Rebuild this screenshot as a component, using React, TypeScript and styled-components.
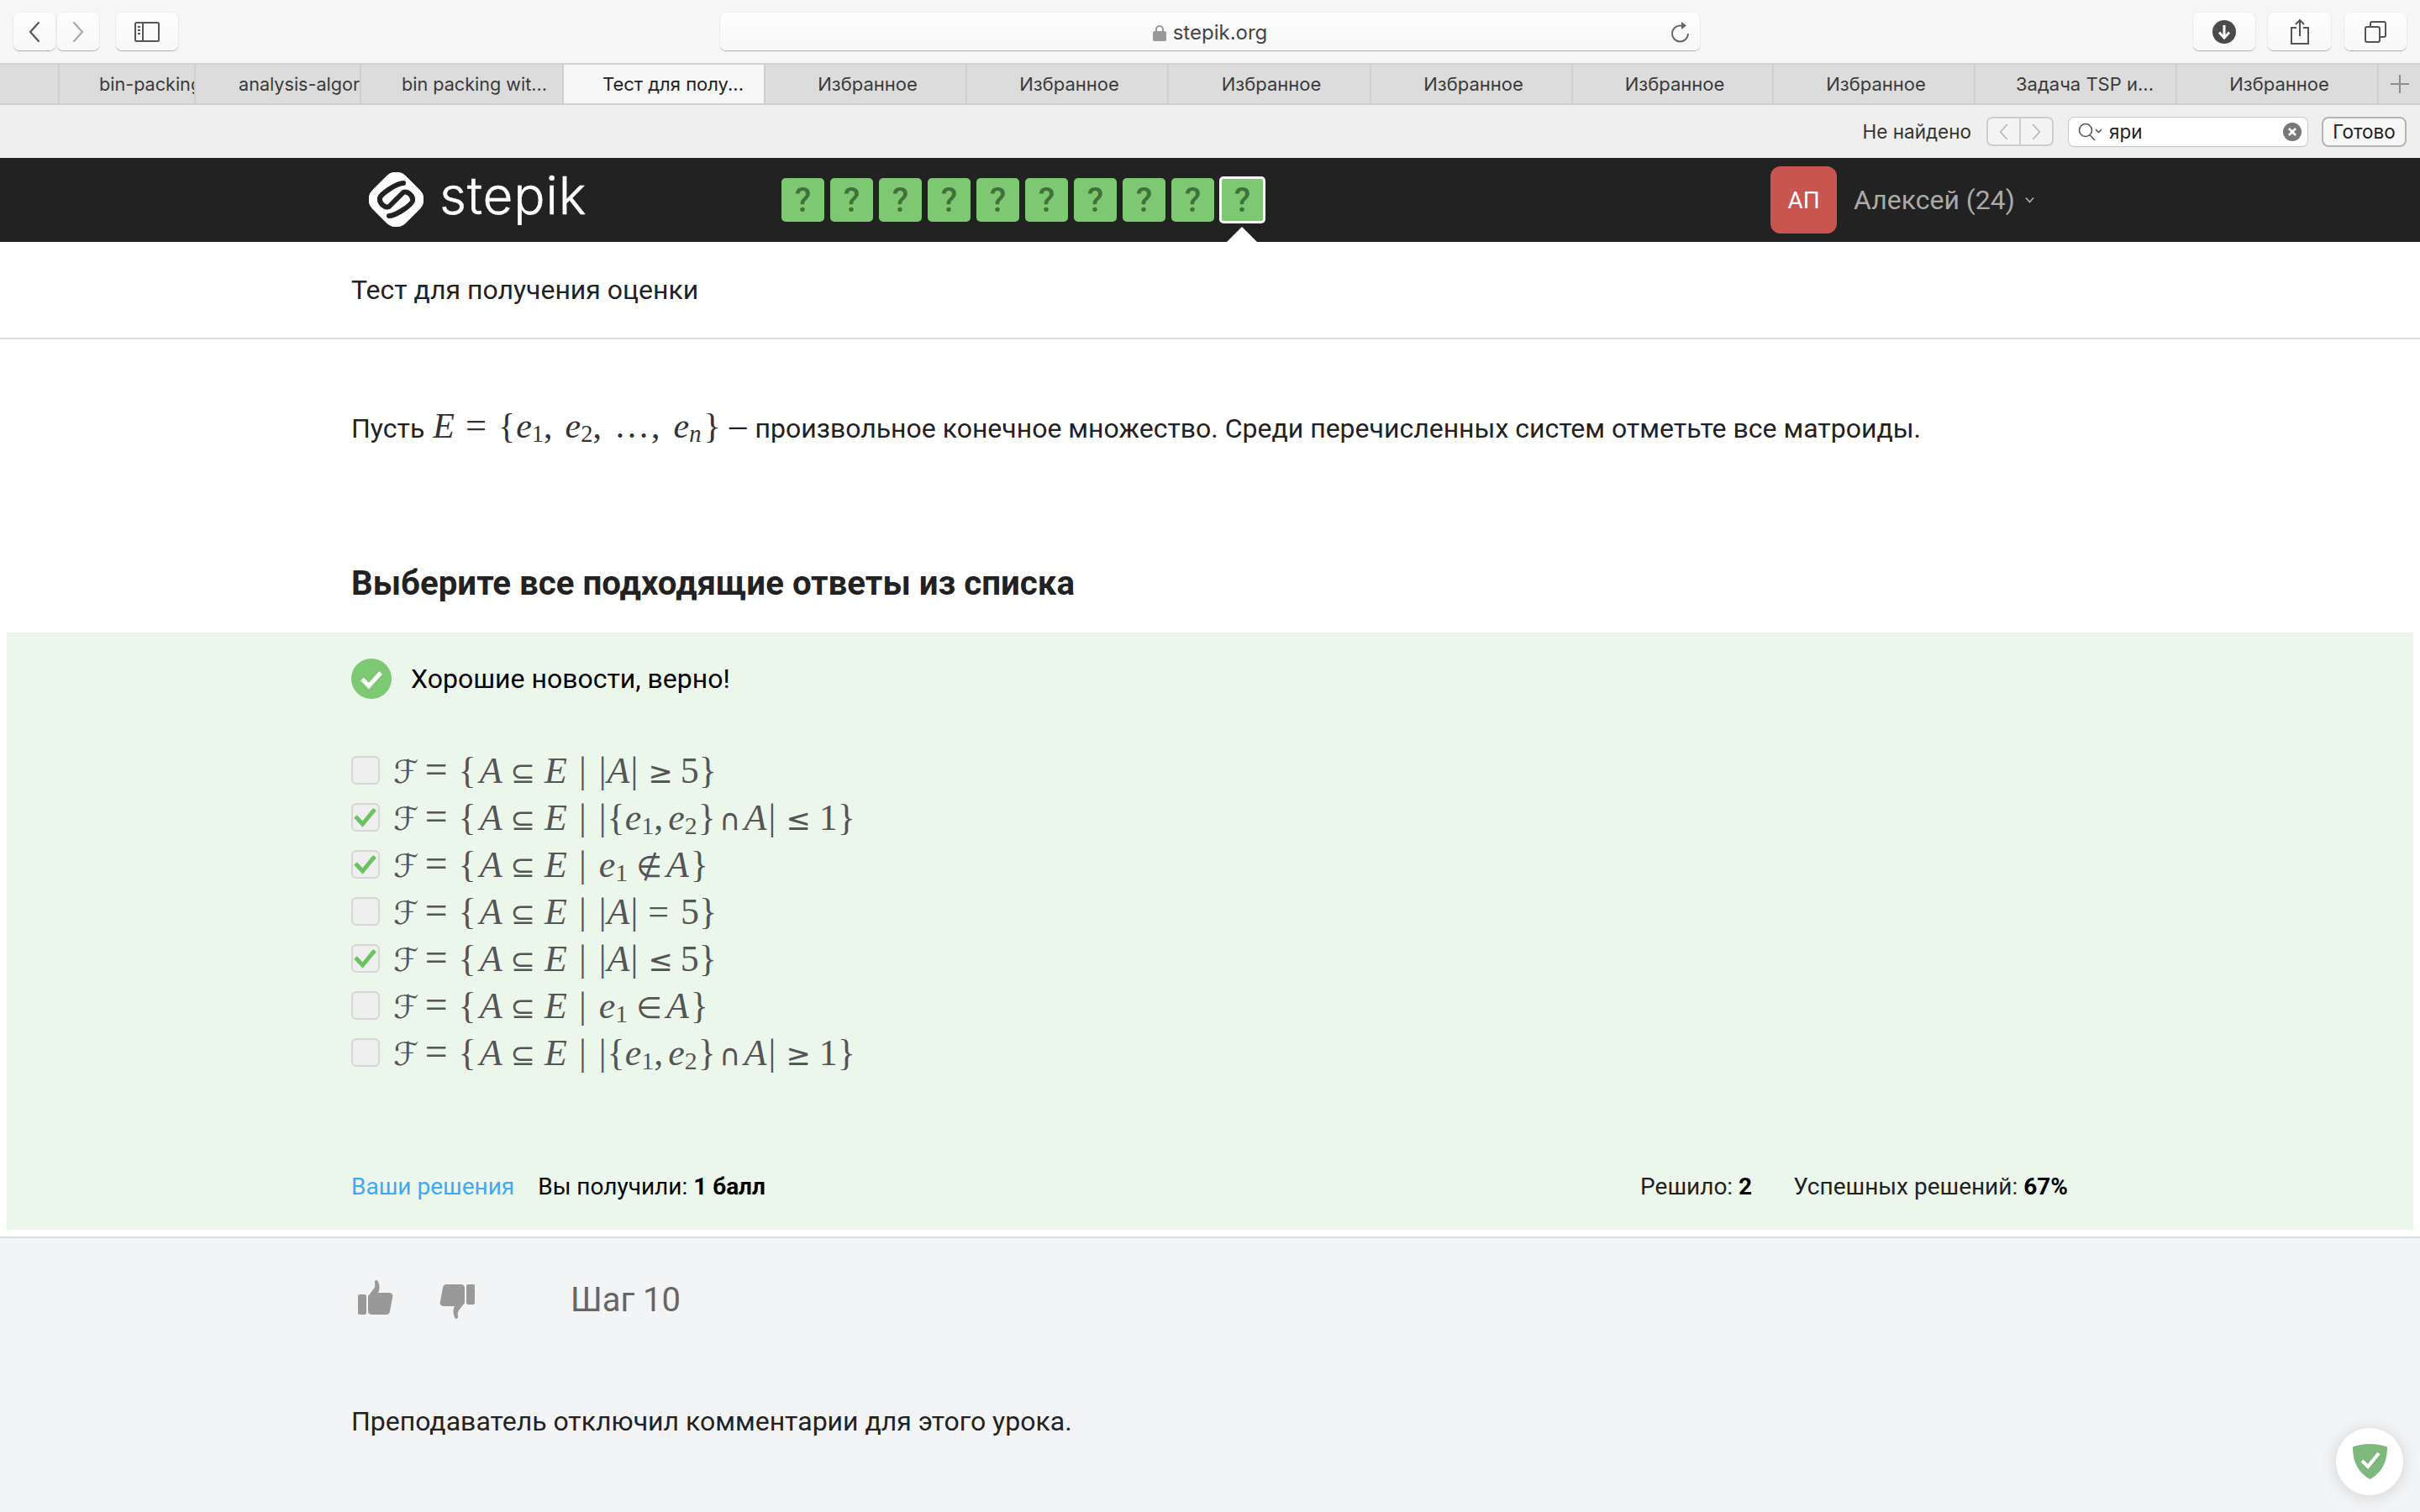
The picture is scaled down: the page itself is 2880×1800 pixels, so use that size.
import React from 'react';
import styled, { createGlobalStyle } from 'styled-components';

const GlobalStyle = createGlobalStyle`
  html, body {
    margin: 0;
    padding: 0;
    background: #fff;
  }
  * { box-sizing: border-box; }
`;

const Page = styled.div`
  position: relative;
  width: 2880px;
  height: 1800px;
  overflow: hidden;
  font-family: Roboto, "Liberation Sans", sans-serif;
  color: #222;
  display: flex;
  flex-direction: column;
`;

/* ---- safari chrome ---- */
const Toolbar = styled.div`
  height: 75px;
  flex: none;
  background: #f6f6f6;
  display: flex;
  align-items: flex-start;
  padding: 15px 16px 0;
`;

const ToolButton = styled.div<{ $w: number; $ml?: number }>`
  width: ${p => p.$w}px;
  height: 45px;
  margin-left: ${p => p.$ml ?? 0}px;
  flex: none;
  background: linear-gradient(#fdfdfd, #f8f8f8);
  border-radius: 7px;
  box-shadow: 0 1px 1px rgba(0, 0, 0, 0.28), 0 0 1px rgba(0, 0, 0, 0.18);
  display: flex;
  align-items: center;
  justify-content: center;
`;

const AddressBar = styled(ToolButton)`
  position: relative;
  gap: 8px;
  padding-top: 2px;
  font-family: Inter, Roboto, sans-serif;
  font-size: 24px;
  color: #444;
`;

const Reload = styled.span`
  position: absolute;
  right: 11px;
  top: 10px;
  display: flex;
`;

const TabBar = styled.div`
  height: 50px;
  flex: none;
  background: #dcdcdc;
  border-top: 2px solid #d2d2d2;
  border-bottom: 2px solid #cfcfcf;
  display: flex;
`;

const Tab = styled.div<{ $w: number; $active?: boolean; $clip?: number; $pad?: number }>`
  width: ${p => p.$w}px;
  flex: none;
  overflow: hidden;
  white-space: nowrap;
  display: flex;
  align-items: center;
  justify-content: ${p => (p.$clip ? 'flex-start' : 'center')};
  padding-left: ${p => p.$clip ?? p.$pad ?? 5}px;
  border-right: 2px solid #cfcfcf;
  background: ${p => (p.$active ? '#f6f6f6' : 'transparent')};
  color: ${p => (p.$active ? '#222' : '#3a3a3a')};
  font-family: Inter, Roboto, sans-serif;
  font-size: ${p => (p.$clip ? '21.6px' : '22px')};
`;

const PlusTab = styled.div`
  flex: 1;
  display: flex;
  align-items: center;
  justify-content: center;
`;

const FindBar = styled.div`
  height: 63px;
  flex: none;
  background: #efefef;
  display: flex;
  align-items: center;
  justify-content: flex-end;
  padding-right: 16px;
  font-family: Inter, Roboto, sans-serif;
  font-size: 22.5px;
  color: #333;
`;

const FindNav = styled.div`
  width: 80px;
  height: 35px;
  margin: 0 18px;
  display: flex;
  border: 2px solid #cdcdcd;
  border-radius: 7px;
  background: #f4f4f4;
`;

const FindNavPart = styled.div<{ $divider?: boolean }>`
  flex: 1;
  display: flex;
  align-items: center;
  justify-content: center;
  border-left: ${p => (p.$divider ? '2px solid #cdcdcd' : 'none')};
`;

const FindInput = styled.div`
  width: 284px;
  height: 34px;
  background: #fff;
  border-radius: 7px;
  box-shadow: 0 0 0 1px #c8c8c8, 0 1px 1px rgba(0, 0, 0, 0.2);
  display: flex;
  align-items: center;
  padding: 0 7px 0 11px;
  gap: 7px;
`;

const FindValue = styled.span`
  flex: 1;
  color: #222;
`;

const DoneButton = styled.div`
  width: 101px;
  height: 36px;
  margin-left: 17px;
  border: 2px solid #b4b4b4;
  border-radius: 8px;
  background: #f6f6f6;
  display: flex;
  align-items: center;
  justify-content: center;
  color: #222;
`;

/* ---- stepik nav ---- */
const Nav = styled.div`
  height: 100px;
  flex: none;
  background: #222;
  display: flex;
  align-items: center;
  padding-left: 439px;
`;

const Logo = styled.div`
  width: 491px;
  height: 100px;
  flex: none;
  display: flex;
  align-items: center;
  gap: 19px;
  margin-top: -2px;
`;

const LogoWord = styled.span`
  font-family: Inter, "Open Sans", sans-serif;
  font-weight: 300;
  font-size: 62px;
  letter-spacing: 0.8px;
  -webkit-text-stroke: 0.5px #fff;
  line-height: 62px;
  margin-top: -8px;
  color: #fff;
`;

const QuizSteps = styled.div`
  width: 1177px;
  flex: none;
  display: flex;
  align-items: center;
  gap: 7px;
`;

const QuizStep = styled.div<{ $current?: boolean }>`
  position: relative;
  width: ${p => (p.$current ? '55px' : '51px')};
  height: ${p => (p.$current ? '56px' : '52px')};
  margin-left: ${p => (p.$current ? '-1px' : '0')};
  flex: none;
  background: #7ec873;
  border-radius: 5px;
  border: ${p => (p.$current ? '3px solid #fff' : 'none')};
  display: flex;
  align-items: center;
  justify-content: center;
  color: #40713b;
  font-size: 40px;
  font-weight: 500;

  ${p =>
    p.$current &&
    `&::after {
      content: '';
      position: absolute;
      left: 6px;
      top: 57px;
      border-left: 18px solid transparent;
      border-right: 18px solid transparent;
      border-bottom: 18px solid #fff;
    }`}
`;

const Avatar = styled.div`
  width: 79px;
  height: 80px;
  flex: none;
  background: #c95550;
  border-radius: 12px;
  color: #fff;
  font-size: 28px;
  display: flex;
  align-items: center;
  justify-content: center;
`;

const UserName = styled.div`
  margin-left: 20px;
  display: flex;
  align-items: center;
  gap: 12px;
  color: #aaa;
  font-size: 32px;
`;

/* ---- lesson ---- */
const SubHeader = styled.div`
  height: 116px;
  flex: none;
  padding-left: 418px;
  border-bottom: 2px solid #ddd;
  display: flex;
  align-items: center;
  font-size: 32px;
`;

const QuestionText = styled.div`
  padding: 80px 0 0 418px;
  height: 267px;
  flex: none;
  font-size: 32px;
  line-height: 48px;
  white-space: nowrap;
`;

const Heading = styled.h2`
  margin: 0;
  padding-left: 418px;
  height: 82px;
  flex: none;
  font-size: 40.25px;
  font-weight: 700;
  line-height: 48px;
  color: #222;
`;

const Feedback = styled.div`
  margin: 0 8px;
  height: 711px;
  flex: none;
  background: #ecf7ec;
  padding: 30px 0 0 410px;
  display: flex;
  flex-direction: column;
`;

const FeedbackTitle = styled.div`
  display: flex;
  align-items: center;
  gap: 23px;
  height: 50px;
  color: #000;
  font-size: 32px;
`;

const Answers = styled.div`
  margin-top: 67px;
  display: flex;
  flex-direction: column;
  gap: 23px;
`;

const Answer = styled.div`
  height: 33px;
  display: flex;
  align-items: center;
`;

const CheckBox = styled.div`
  width: 34px;
  height: 34px;
  flex: none;
  background: #efefef;
  border: 2px solid #d6d6d6;
  border-radius: 6px;
  margin-right: 16px;
  display: flex;
  align-items: center;
  justify-content: center;
`;

const MathRun = styled.span<{ $size?: number; $color?: string }>`
  display: inline-flex;
  align-items: baseline;
  white-space: nowrap;
  font-family: "Liberation Serif", "DejaVu Serif", serif;
  font-size: ${p => p.$size ?? 44}px;
  color: ${p => p.$color ?? '#555'};
  line-height: 1;
`;

const Ital = styled.i<{ $l?: number; $r?: number }>`
  margin-left: ${p => p.$l ?? 0}px;
  margin-right: ${p => p.$r ?? 0}px;
`;

const Op = styled.span<{ $l?: number; $r?: number; $scale?: number }>`
  margin-left: ${p => p.$l ?? 0}px;
  margin-right: ${p => p.$r ?? 0}px;
  ${p => (p.$scale ? `font-size: ${p.$scale}em;` : '')}
`;

const Sym = styled.span<{ $l?: number; $r?: number }>`
  font-family: "DejaVu Sans", sans-serif;
  font-size: 0.8em;
  margin-left: ${p => p.$l ?? 0}px;
  margin-right: ${p => p.$r ?? 0}px;
`;

const Cal = styled.span`
  font-family: "DejaVu Sans", sans-serif;
  font-style: italic;
  font-size: 0.86em;
  margin-right: 6px;
`;

const Sub = styled.span`
  font-size: 0.68em;
  position: relative;
  top: 5px;
`;

const FeedbackFooter = styled.div`
  margin-top: auto;
  margin-bottom: 29px;
  width: 2043px;
  display: flex;
  align-items: center;
  font-size: 28px;
  color: #000;
  line-height: 44px;
`;

const SolutionsLink = styled.a`
  color: #3fa9f5;
  margin-right: 28px;
`;

const FooterStat = styled.span<{ $ml?: string; $l?: number }>`
  margin-left: ${p => p.$ml ?? `${p.$l ?? 0}px`};
  color: #222;
`;

const Strong = styled.b`
  color: #000;
`;

const Bottom = styled.div`
  flex: 1;
  margin-top: 8px;
  background: #f3f4f6;
  border-top: 2px solid #ddd;
  padding-left: 418px;
`;

const StepRow = styled.div`
  height: 106px;
  padding: 0 0 0 8px;
  margin-top: 20px;
  display: flex;
  align-items: center;
  gap: 55px;
`;

const Thumbs = styled.div`
  display: flex;
  align-items: flex-start;
  gap: 55px;
`;

const StepLabel = styled.span`
  margin-left: 59px;
  font-size: 40px;
  color: #666;
`;

const CommentsOff = styled.p`
  margin: 68px 0 0;
  font-size: 32px;
  line-height: 48px;
  color: #222;
`;

const ShieldBadge = styled.div`
  position: absolute;
  left: 2780px;
  top: 1700px;
  width: 80px;
  height: 80px;
  border-radius: 50%;
  background: #fff;
  box-shadow: 0 2px 20px rgba(0, 0, 0, 0.14);
  display: flex;
  align-items: center;
  justify-content: center;
`;

/* ---- drawings ---- */
const Chevron = ({ dir, color, w = 14, h = 26, sw = 2.2 }: { dir: 'l' | 'r'; color: string; w?: number; h?: number; sw?: number }) => (
  <svg width={w} height={h} viewBox="0 0 14 26" fill="none" stroke={color} strokeWidth={sw} strokeLinecap="round" strokeLinejoin="round">
    <path d={dir === 'l' ? 'M12 2 L2 13 L12 24' : 'M2 2 L12 13 L2 24'} />
  </svg>
);

const SidebarIcon = () => (
  <svg width="30" height="24" viewBox="0 0 30 24" fill="none" stroke="#555" strokeWidth="2">
    <rect x="1" y="1" width="28" height="22" rx="1.5" />
    <path d="M10 1 V23" />
    <path d="M4 6 H7 M4 10 H7 M4 14 H7" />
  </svg>
);

const LockIcon = () => (
  <svg width="16" height="20" viewBox="0 0 16 20">
    <path d="M4 9 V6 a4 4 0 0 1 8 0 V9" fill="none" stroke="#999" strokeWidth="2" />
    <rect x="0" y="8" width="16" height="12" rx="2" fill="#999" />
  </svg>
);

const ReloadIcon = () => (
  <svg width="24" height="26" viewBox="0 0 24 26" fill="none" stroke="#666" strokeWidth="2">
    <path d="M21 15 a9.5 9.5 0 1 1 -9.5 -9.5 H14" />
    <path d="M13 1 L19 5.5 L13 10 Z" fill="#666" stroke="none" />
  </svg>
);

const DownloadIcon = () => (
  <svg width="28" height="28" viewBox="0 0 28 28">
    <circle cx="14" cy="14" r="14" fill="#4a4a4a" />
    <path d="M14 6 V20 M8 14.5 L14 21 L20 14.5" fill="none" stroke="#fff" strokeWidth="3" />
  </svg>
);

const ShareIcon = () => (
  <svg width="24" height="32" viewBox="0 0 24 32" fill="none" stroke="#555" strokeWidth="2">
    <path d="M8 11 H2 V30 H22 V11 H16" />
    <path d="M12 21 V2 M7 7 L12 2 L17 7" />
  </svg>
);

const TabsIcon = () => (
  <svg width="26" height="26" viewBox="0 0 26 26" fill="none" stroke="#555" strokeWidth="2">
    <rect x="1" y="7" width="17" height="18" rx="2" />
    <path d="M7 7 V3 a2 2 0 0 1 2 -2 H23 a2 2 0 0 1 2 2 V17 a2 2 0 0 1 -2 2 H18" />
  </svg>
);

const PlusIcon = () => (
  <svg width="24" height="24" viewBox="0 0 24 24" stroke="#8e8e8e" strokeWidth="2">
    <path d="M12 1 V23 M1 12 H23" />
  </svg>
);

const FindGlass = () => (
  <svg width="30" height="22" viewBox="0 0 30 22" fill="none" stroke="#555" strokeWidth="1.6">
    <circle cx="9" cy="9" r="7.5" />
    <path d="M14 14.5 L20 21" />
    <path d="M21 8 L24.5 11.5 L28 8" />
  </svg>
);

const ClearIcon = () => (
  <svg width="22" height="22" viewBox="0 0 22 22">
    <circle cx="11" cy="11" r="11" fill="#777" />
    <path d="M7 7 L15 15 M15 7 L7 15" stroke="#fff" strokeWidth="2.6" />
  </svg>
);

const hookPath = 'M41 13 C33 13 14 26 13 31 C12 37 19 43 24 41 L32 33';

const StepikMark = () => (
  <svg width="65" height="65" viewBox="0 0 65 65">
    <rect x="4.5" y="4.5" width="56" height="56" rx="16" fill="#fff" transform="rotate(45 32.5 32.5)" />
    <g fill="none" stroke="#222" strokeWidth="6" strokeLinecap="round" strokeLinejoin="round">
      <path d={hookPath} />
      <path d={hookPath} transform="rotate(180 32.5 32.5)" />
    </g>
  </svg>
);

const SmallChevron = () => (
  <svg width="11" height="8" viewBox="0 0 11 8" fill="none" stroke="#aaa" strokeWidth="1.8">
    <path d="M1 1.5 L5.5 6.5 L10 1.5" />
  </svg>
);

const CheckedCircle = () => (
  <svg width="48" height="48" viewBox="0 0 48 48">
    <circle cx="24" cy="24" r="24" fill="#7dc873" />
    <path d="M13 24.5 L21 32.5 L35 17" fill="none" stroke="#fff" strokeWidth="5" />
  </svg>
);

const Tick = () => (
  <svg width="28" height="24" viewBox="0 0 28 24" fill="none" stroke="#6cc164" strokeWidth="5">
    <path d="M2 11 L10.5 20 L25 2.5" />
  </svg>
);

const ThumbIcon = ({ down }: { down?: boolean }) => (
  <svg width="42" height="41" viewBox="0 0 42 41" fill="#999" style={down ? { transform: 'rotate(180deg)', marginTop: 5 } : undefined}>
    <rect x="0" y="17" width="10" height="24" rx="2" />
    <path d="M12 19 L19 10 C21 7 20 4 20 2 C20 0 23 -1 24 2 C26 6 26 11 24 15 L37 15 C41 15 42 18 41 21 L38 37 C38 39 36 41 34 41 L16 41 C14 41 12 39 12 37 Z" />
  </svg>
);

const ShieldIcon = () => (
  <svg width="41" height="42" viewBox="0 0 41 42">
    <path d="M20.5 0 C13 0 6 1.5 0 3.5 C0 20 5 33 20.5 42 C36 33 41 20 41 3.5 C35 1.5 28 0 20.5 0 Z" fill="#7db87d" />
    <path d="M11 20 L18 27 L31 11" fill="none" stroke="#fff" strokeWidth="4" />
  </svg>
);

/* ---- formula pieces ---- */
const E1 = () => (
  <>
    <Ital>e</Ital>
    <Sub>1</Sub>
  </>
);

const SetPair = () => (
  <>
    <Op>|</Op>
    <Op $l={1}>{'{'}</Op>
    <E1 />
    <Op $r={6}>,</Op>
    <Ital>e</Ital>
    <Sub>2</Sub>
    <Op $l={1}>{'}'}</Op>
    <Sym $l={4}>∩</Sym>
    <Ital $l={4}>A</Ital>
    <Op $l={2}>|</Op>
  </>
);

const Formula = ({ children, close = 0 }: { children: React.ReactNode; close?: number }) => (
  <MathRun>
    <Cal>ℱ</Cal>
    <Op $l={2} $r={13} $scale={1.08}>=</Op>
    <Op>{'{'}</Op>
    <Ital $l={4}>A</Ital>
    <Sym $l={10} $r={11}>⊆</Sym>
    <Ital>E</Ital>
    <Op $l={14} $r={15}>|</Op>
    {children}
    <Op $l={close}>{'}'}</Op>
  </MathRun>
);

const AbsA = () => (
  <>
    <Op>|</Op>
    <Ital $l={1}>A</Ital>
    <Op $l={1}>|</Op>
  </>
);

const answers: { checked: boolean; close?: number; tail: React.ReactNode }[] = [
  { checked: false, tail: <><AbsA /><Sym $l={12} $r={9}>≥</Sym>5</> },
  { checked: true, tail: <><SetPair /><Sym $l={12} $r={10}>≤</Sym>1</> },
  { checked: true, close: 2, tail: <><E1 /><Sym $l={10} $r={5}>∉</Sym><Ital>A</Ital></> },
  { checked: false, tail: <><AbsA /><Op $l={12} $r={14}>=</Op>5</> },
  { checked: true, tail: <><AbsA /><Sym $l={12} $r={9}>≤</Sym>5</> },
  { checked: false, close: 2, tail: <><E1 /><Sym $l={10} $r={5}>∈</Sym><Ital>A</Ital></> },
  { checked: false, tail: <><SetPair /><Sym $l={12} $r={10}>≥</Sym>1</> },
];

const tabs = [
  { w: 71, label: '' },
  { w: 162, label: 'bin-packing', clip: 47 },
  { w: 197, label: 'analysis-algorithms', clip: 51 },
  { w: 241, label: 'bin packing wit...', clip: 48 },
  { w: 240, label: 'Тест для полу...', active: true, pad: 22 },
  { w: 240, label: 'Избранное' },
  { w: 240, label: 'Избранное' },
  { w: 241, label: 'Избранное' },
  { w: 240, label: 'Избранное' },
  { w: 239, label: 'Избранное' },
  { w: 240, label: 'Избранное' },
  { w: 240, label: 'Задача TSP и...', pad: 22 },
  { w: 240, label: 'Избранное' },
];

const App: React.FC = () => (
  <Page>
    <GlobalStyle />
    <Toolbar>
      <ToolButton $w={50}><Chevron dir="l" color="#555" /></ToolButton>
      <ToolButton $w={50} $ml={2}><Chevron dir="r" color="#aaa" /></ToolButton>
      <ToolButton $w={74} $ml={20}><SidebarIcon /></ToolButton>
      <AddressBar $w={1166} $ml={645}>
        <LockIcon />
        stepik.org
        <Reload><ReloadIcon /></Reload>
      </AddressBar>
      <ToolButton $w={74} $ml={587}><DownloadIcon /></ToolButton>
      <ToolButton $w={75} $ml={15}><ShareIcon /></ToolButton>
      <ToolButton $w={74} $ml={16}><TabsIcon /></ToolButton>
    </Toolbar>
    <TabBar>
      {tabs.map((t, i) => (
        <Tab key={i} $w={t.w} $active={t.active} $clip={t.clip} $pad={t.pad}>{t.label}</Tab>
      ))}
      <PlusTab><PlusIcon /></PlusTab>
    </TabBar>
    <FindBar>
      Не найдено
      <FindNav>
        <FindNavPart><Chevron dir="l" color="#b5b5b5" w={11} h={20} sw={2} /></FindNavPart>
        <FindNavPart $divider><Chevron dir="r" color="#b5b5b5" w={11} h={20} sw={2} /></FindNavPart>
      </FindNav>
      <FindInput>
        <FindGlass />
        <FindValue>яри</FindValue>
        <ClearIcon />
      </FindInput>
      <DoneButton>Готово</DoneButton>
    </FindBar>
    <Nav>
      <Logo>
        <StepikMark />
        <LogoWord>stepik</LogoWord>
      </Logo>
      <QuizSteps>
        {Array.from({ length: 10 }, (_, i) => (
          <QuizStep key={i} $current={i === 9}>?</QuizStep>
        ))}
      </QuizSteps>
      <Avatar>АП</Avatar>
      <UserName>Алексей (24) <SmallChevron /></UserName>
    </Nav>
    <SubHeader>Тест для получения оценки</SubHeader>
    <QuestionText>
      Пусть{' '}
      <MathRun $size={42} $color="#333">
        <Ital $l={2} $r={13}>E</Ital>
        <Op $r={14} $scale={1.06}>=</Op>
        <Op $r={1}>{'{'}</Op>
        <E1 /><Op $r={15}>,</Op>
        <Ital>e</Ital><Sub>2</Sub><Op $r={15}>,</Op>
        <Op $r={2}>…</Op><Op $r={16}>,</Op>
        <Ital>e</Ital><Sub><i>n</i></Sub>
        <Op $l={3}>{'}'}</Op>
      </MathRun>{' '}
      — произвольное конечное множество. Среди перечисленных систем отметьте все матроиды.
    </QuestionText>
    <Heading>Выберите все подходящие ответы из списка</Heading>
    <Feedback>
      <FeedbackTitle>
        <CheckedCircle />
        Хорошие новости, верно!
      </FeedbackTitle>
      <Answers>
        {answers.map((a, i) => (
          <Answer key={i}>
            <CheckBox>{a.checked && <Tick />}</CheckBox>
            <Formula close={a.close}>{a.tail}</Formula>
          </Answer>
        ))}
      </Answers>
      <FeedbackFooter>
        <SolutionsLink>Ваши решения</SolutionsLink>
        <span>Вы получили: <Strong>1 балл</Strong></span>
        <FooterStat $ml="auto">Решило: <Strong>2</Strong></FooterStat>
        <FooterStat $l={49}>Успешных решений: <Strong>67%</Strong></FooterStat>
      </FeedbackFooter>
    </Feedback>
    <Bottom>
      <StepRow>
        <Thumbs>
          <ThumbIcon />
          <ThumbIcon down />
        </Thumbs>
        <StepLabel>Шаг 10</StepLabel>
      </StepRow>
      <CommentsOff>Преподаватель отключил комментарии для этого урока.</CommentsOff>
    </Bottom>
    <ShieldBadge><ShieldIcon /></ShieldBadge>
  </Page>
);

export default App;
